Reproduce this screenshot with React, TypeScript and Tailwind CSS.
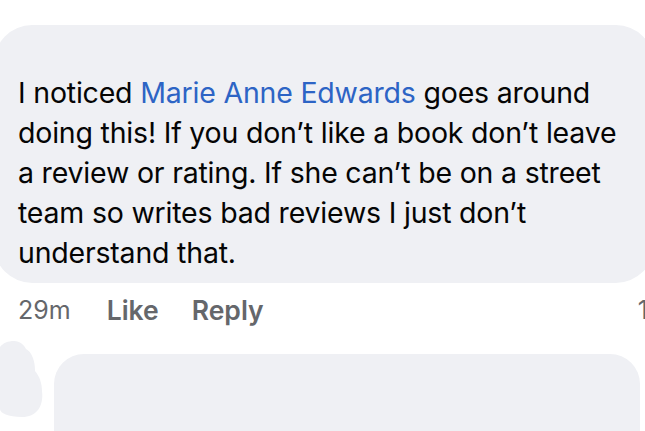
const App = () => {
  return (
    <div
      className="h-[431px] w-[645px] overflow-hidden bg-white pt-[25px]"
      style={{ fontFamily: "Inter, 'Noto Sans', sans-serif" }}
    >
      {/* comment bubble */}
      <div className="-ml-[6px] w-[660px] rounded-[38px] bg-[#eff0f4] pb-[10px] pl-[24px] pt-[48px] pr-[20px]">
        <p className="text-[28.5px] leading-[40px] tracking-[-0.2px] text-[#050505]">
          I noticed <span className="text-[#2d64c5]">Marie Anne Edwards</span>{" "}
          goes around doing this! If you don’t like a book don’t leave a review
          or rating. If she can’t be on a street team so writes bad reviews I
          just don’t understand that.
        </p>
      </div>

      {/* actions */}
      <div className="flex h-[56px] items-center pl-[18px] text-[25px] text-[#65676b]">
        <span>29m</span>
        <span className="ml-[36px] text-[26.5px] font-semibold">Like</span>
        <span className="ml-[33px] text-[26.5px] font-semibold">Reply</span>
        <span className="ml-auto -mr-[3px]">1</span>
      </div>

      {/* next comment */}
      <div className="flex items-start">
        <svg width="52" height="80" viewBox="0 0 52 80" className="shrink-0">
          <path
            d="M14 2 C20 2 24 6 26 10 C32 13 35 22 35 32 C40 38 42 45 42 52 C44 68 36 78 22 78 C8 78 0 74 0 70 L0 8 C3 4 8 2 14 2 Z"
            fill="#eff0f4"
          />
        </svg>
        <div className="ml-[2px] mt-[15px] h-[100px] w-[586px] rounded-t-[30px] bg-[#eff0f4]" />
      </div>
    </div>
  );
};

export default App;
